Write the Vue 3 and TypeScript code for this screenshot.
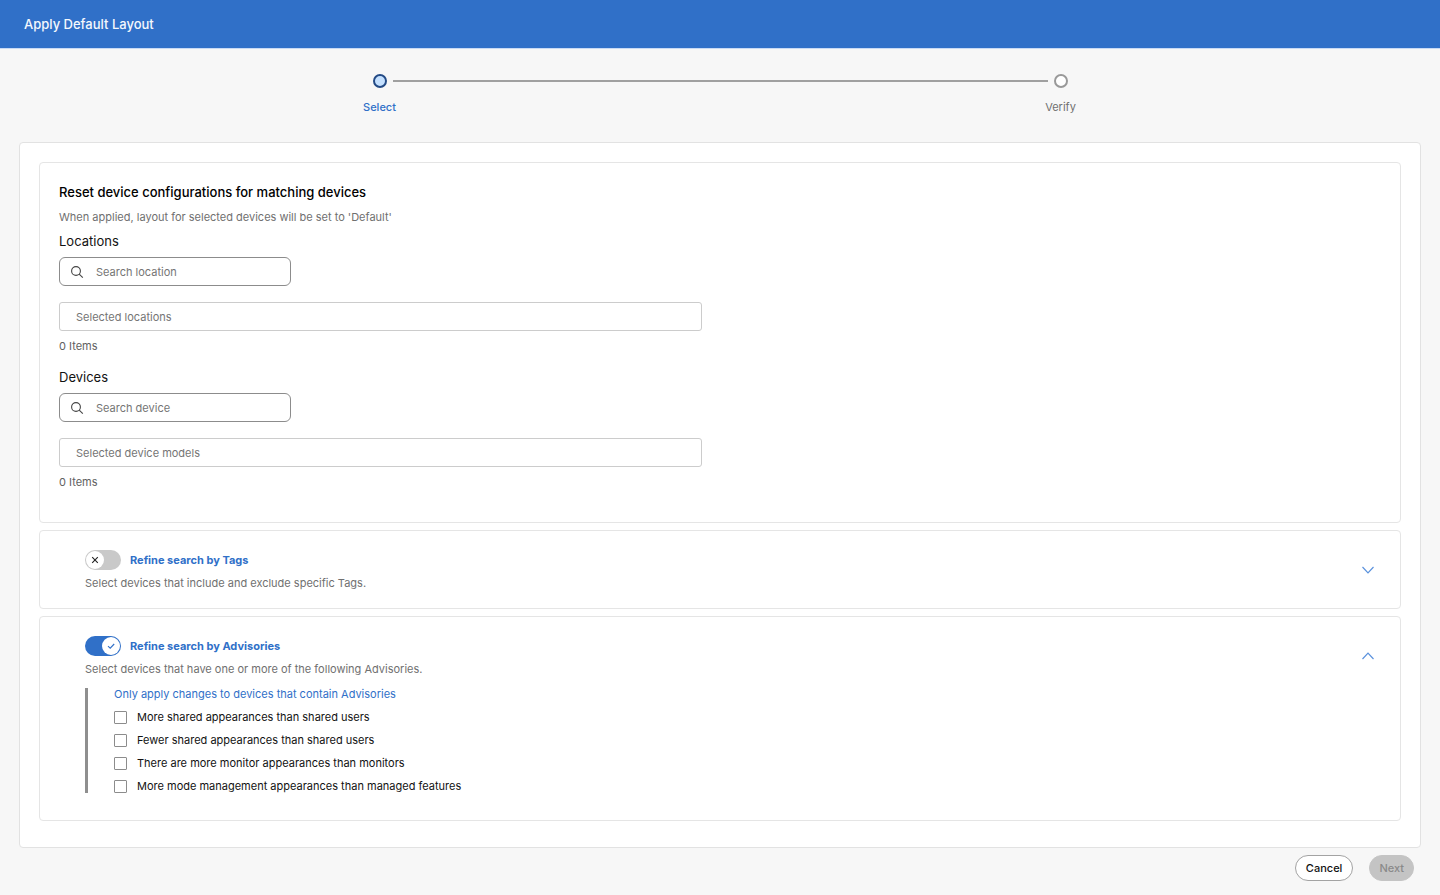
<script setup lang="ts">
import { ref } from 'vue'

interface Picker {
  id: string
  title: string
  search: string
  selected: string
  query: string
  items: string[]
}

interface Advisory {
  id: string
  label: string
  checked: boolean
}

const pickers = ref<Picker[]>([
  { id: 'location', title: 'Locations', search: 'Search location', selected: 'Selected locations', query: '', items: [] },
  { id: 'device', title: 'Devices', search: 'Search device', selected: 'Selected device models', query: '', items: [] },
])

const tagsOn = ref(false)
const advisoriesOn = ref(true)
const advisoriesOpen = ref(true)

const advisories = ref<Advisory[]>([
  { id: 'more-shared', label: 'More shared appearances than shared users', checked: false },
  { id: 'fewer-shared', label: 'Fewer shared appearances than shared users', checked: false },
  { id: 'more-monitor', label: 'There are more monitor appearances than monitors', checked: false },
  { id: 'more-mode', label: 'More mode management appearances than managed features', checked: false },
])
</script>

<template>
  <div class="page">
    <header class="topbar">
      <h1>Apply Default Layout</h1>
    </header>

    <ol class="stepper">
      <li class="step current" aria-current="step">
        <div class="track"><span class="gap"></span><span class="dot"></span><span class="line"></span></div>
        <span class="step-label">Select</span>
      </li>
      <li class="step">
        <div class="track"><span class="line"></span><span class="dot"></span><span class="gap"></span></div>
        <span class="step-label">Verify</span>
      </li>
    </ol>

    <main class="panel">
      <section class="card reset">
        <h2>Reset device configurations for matching devices</h2>
        <p class="note">When applied, layout for selected devices will be set to 'Default'</p>
        <div v-for="p in pickers" :key="p.id" class="picker">
          <label class="picker-title" :for="p.id">{{ p.title }}</label>
          <div class="search">
            <svg viewBox="0 0 14 14" width="14" height="14" aria-hidden="true">
              <circle cx="6" cy="6" r="4.4" />
              <path d="M9.2 9.2 L12.8 12.6" />
            </svg>
            <input :id="p.id" v-model="p.query" type="text" :placeholder="p.search" />
          </div>
          <input class="selected" type="text" readonly :placeholder="p.selected" :aria-label="p.selected" />
          <p class="count">{{ p.items.length }} Items</p>
        </div>
      </section>

      <section class="card refine">
        <div class="refine-body">
          <div class="refine-head">
            <label class="switch" :class="{ on: tagsOn }">
              <input v-model="tagsOn" type="checkbox" role="switch" aria-labelledby="tags-title" />
              <span class="knob">
                <svg viewBox="0 0 10 10" width="10" height="10" aria-hidden="true">
                  <path v-if="tagsOn" d="M2 5.2 L4.2 7.2 L8.2 3" />
                  <path v-else d="M2.2 2.2 L7.8 7.8 M7.8 2.2 L2.2 7.8" />
                </svg>
              </span>
            </label>
            <h3 id="tags-title">Refine search by Tags</h3>
          </div>
          <p class="note">Select devices that include and exclude specific Tags.</p>
        </div>
        <button class="chevron" type="button" aria-label="Expand tags">
          <svg viewBox="0 0 14 8" width="14" height="8" aria-hidden="true"><path d="M1.5 1 L7 6.8 L12.5 1" /></svg>
        </button>
      </section>

      <section class="card refine advisories">
        <div class="refine-body">
          <div class="refine-head">
            <label class="switch" :class="{ on: advisoriesOn }">
              <input v-model="advisoriesOn" type="checkbox" role="switch" aria-labelledby="advisories-title" />
              <span class="knob">
                <svg viewBox="0 0 10 10" width="10" height="10" aria-hidden="true">
                  <path v-if="advisoriesOn" d="M2 5.2 L4.2 7.2 L8.2 3" />
                  <path v-else d="M2.2 2.2 L7.8 7.8 M7.8 2.2 L2.2 7.8" />
                </svg>
              </span>
            </label>
            <h3 id="advisories-title">Refine search by Advisories</h3>
          </div>
          <p class="note">Select devices that have one or more of the following Advisories.</p>
          <fieldset v-if="advisoriesOpen" class="options">
            <legend class="hidden">Advisories</legend>
            <p class="options-title">Only apply changes to devices that contain Advisories</p>
            <label v-for="a in advisories" :key="a.id" class="option">
              <input v-model="a.checked" type="checkbox" />
              <span>{{ a.label }}</span>
            </label>
          </fieldset>
        </div>
        <button class="chevron" type="button" aria-label="Toggle advisories" :aria-expanded="advisoriesOpen" @click="advisoriesOpen = !advisoriesOpen">
          <svg viewBox="0 0 14 8" width="14" height="8" aria-hidden="true"><path d="M1.5 7 L7 1.2 L12.5 7" /></svg>
        </button>
      </section>
    </main>

    <footer class="actions">
      <button class="btn cancel" type="button">Cancel</button>
      <button class="btn next" type="button" disabled>Next</button>
    </footer>
  </div>
</template>

<style>
body {
  margin: 0;
  background: #f7f7f7;
}
</style>

<style scoped>
* {
  box-sizing: border-box;
}

.page {
  min-height: 100vh;
  background: #f7f7f7;
  color: #121212;
  font-family: Inter, "Liberation Sans", sans-serif;
  font-size: 11px;
  line-height: 16px;
}

h1, h2, h3, p, ol {
  margin: 0;
  padding: 0;
}

input, button {
  font: inherit;
  color: inherit;
}

.topbar {
  display: flex;
  align-items: center;
  height: 49px;
  padding: 0 24px;
  background: #3070c8;
  border-bottom: 1px solid #c8daf5;
}

h1 {
  color: #f4f8fd;
  font-size: 13px;
  font-weight: 500;
}

.stepper {
  display: flex;
  padding: 25px 39px 27px;
  list-style: none;
}

.step {
  flex: 1;
  display: flex;
  flex-direction: column;
  align-items: center;
  gap: 11px;
}

.track {
  display: flex;
  align-items: center;
  gap: 6px;
  width: 100%;
}

.gap,
.line {
  flex: 1;
  height: 2px;
}

.line {
  background: #a0a0a0;
}

.dot {
  width: 14px;
  height: 14px;
  border: 2px solid #999;
  border-radius: 50%;
  background: #fff;
}

.current .dot {
  border-color: #234a85;
  background: #c4e0ff;
}

.step-label {
  color: #707070;
}

.current .step-label {
  color: #3070c8;
  font-weight: 500;
}

.panel {
  display: flex;
  flex-direction: column;
  gap: 7px;
  margin: 0 19px;
  padding: 19px 19px 26px;
  background: #fff;
  border: 1px solid #e2e2e2;
  border-radius: 4px;
}

.card {
  border: 1px solid #e5e5e5;
  border-radius: 4px;
}

.reset {
  padding: 21px 19px 32px;
}

h2 {
  color: #000;
  font-size: 13px;
  font-weight: 500;
}

.note {
  color: #707070;
}

.reset .note {
  margin-top: 9px;
}

.picker {
  display: flex;
  flex-direction: column;
  align-items: flex-start;
  margin-top: 8px;
}

.picker + .picker {
  margin-top: 15px;
}

.picker-title {
  font-size: 13px;
}

.search {
  display: flex;
  align-items: center;
  gap: 12px;
  width: 232px;
  height: 29px;
  margin-top: 8px;
  padding: 0 10px;
  border: 1px solid #8c8c8c;
  border-radius: 6px;
}

.search svg {
  flex: none;
  fill: none;
  stroke: #444;
  stroke-width: 1.1;
}

.search input {
  flex: 1;
  min-width: 0;
  padding: 0;
  border: 0;
  outline: 0;
  background: none;
}

input::placeholder {
  color: #757575;
  opacity: 1;
}

.selected {
  width: 50%;
  max-width: 643px;
  height: 29px;
  margin-top: 16px;
  padding: 0 16px;
  border: 1px solid #ccc;
  border-radius: 3px;
  background: #fff;
}

.count {
  margin-top: 7px;
  color: #616161;
}

.refine {
  display: flex;
  align-items: flex-start;
  justify-content: space-between;
  padding: 19px 25px 17px 45px;
}

.advisories {
  padding-bottom: 27px;
}

.refine-head {
  display: flex;
  align-items: center;
  gap: 9px;
  margin-bottom: 5px;
}

h3 {
  color: #3070c8;
  font-size: 11px;
  font-weight: 700;
}

.switch {
  display: flex;
  width: 36px;
  height: 20px;
  padding: 1px;
  border-radius: 10px;
  background: #c9c9c9;
  cursor: pointer;
}

.switch.on {
  justify-content: flex-end;
  background: #3070c8;
}

.switch input,
.hidden {
  position: absolute;
  width: 1px;
  height: 1px;
  margin: 0;
  opacity: 0;
  overflow: hidden;
}

.knob {
  display: flex;
  align-items: center;
  justify-content: center;
  width: 18px;
  height: 18px;
  border-radius: 50%;
  background: #fff;
}

.knob svg {
  fill: none;
  stroke: #222;
  stroke-width: 1.1;
}

.on .knob svg {
  stroke: #3070c8;
}

.chevron {
  display: flex;
  margin-top: 16px;
  padding: 0;
  border: 0;
  background: none;
  cursor: pointer;
}

.chevron svg {
  fill: none;
  stroke: #5b92dd;
  stroke-width: 1.2;
}

.options {
  display: flex;
  flex-direction: column;
  gap: 10px;
  min-width: 0;
  margin: 11px 0 0;
  padding: 0 0 0 26px;
  border: 0;
  border-left: 3px solid #8f8f8f;
}

.options-title {
  color: #3070c8;
  line-height: 13px;
}

.option {
  display: flex;
  align-items: center;
  gap: 10px;
  line-height: 13px;
}

.option input {
  appearance: none;
  width: 13px;
  height: 13px;
  margin: 0;
  border: 1px solid #8c8c8c;
  border-radius: 1px;
  background: #fff;
}

.option input:checked {
  background: #3070c8;
}

.actions {
  display: flex;
  justify-content: flex-end;
  gap: 16px;
  padding: 7px 26px 12px;
}

.btn {
  height: 26px;
  padding: 0 9px;
  border: 1px solid #a3a3a3;
  border-radius: 13px;
  background: #fff;
  font-weight: 500;
}

.cancel {
  padding: 0 10px;
}

.next {
  border-color: #c4c4c4;
  background: #c4c4c4;
  color: #8a8a8a;
}
</style>
